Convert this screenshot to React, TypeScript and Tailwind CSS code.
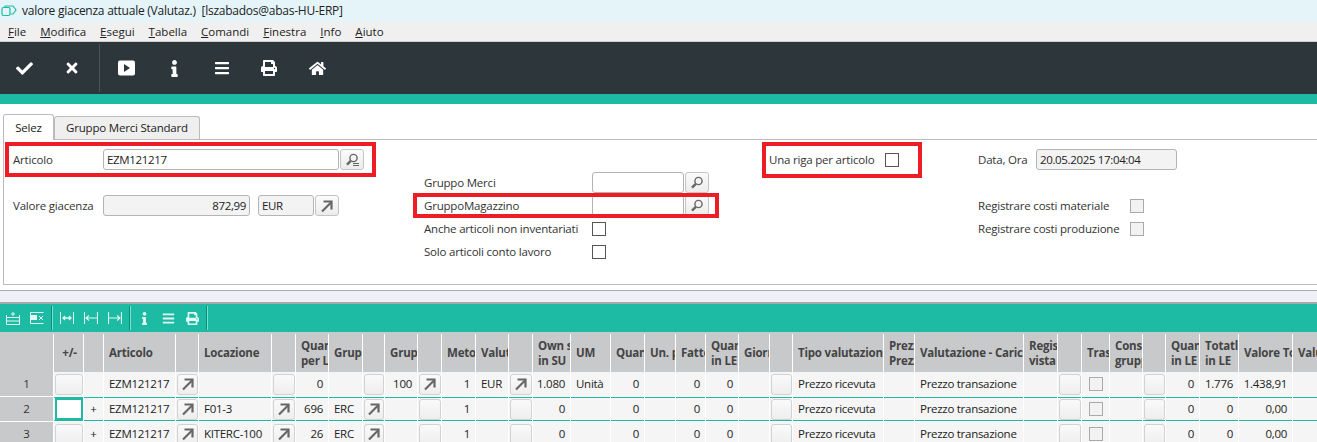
import React from 'react'
import { FaBars, FaCheck, FaHome, FaInfo, FaPrint, FaTimes } from 'react-icons/fa'

const menus = [
  ['F', 'ile'],
  ['M', 'odifica'],
  ['E', 'segui'],
  ['T', 'abella'],
  ['C', 'omandi'],
  ['F', 'inestra'],
  ['I', 'nfo'],
  ['A', 'iuto'],
]

const ArrowIcon = () => (
  <svg width="14" height="14" viewBox="0 0 14 14" fill="none" stroke="#666" strokeWidth="2.2">
    <path d="M2 12.5 L11 3.5" />
    <path d="M3.5 2.5 H11.5 V10.5" />
  </svg>
)

const SearchIcon = ({ list }: { list?: boolean }) => (
  <svg width="16" height="16" viewBox="0 0 16 16" fill="none" stroke="#666">
    <circle cx="9.5" cy="6" r="3.6" strokeWidth="1.4" fill="#f4f4f4" />
    <path d="M6.8 8.8 L3 12.6" strokeWidth="2.4" />
    {list && <path d="M9 11.5 H15 M9 13.5 H15" strokeWidth="1" />}
  </svg>
)

const LightSep = () => (
  <div className="mx-[7px] h-[24px] w-[2px] border-l border-r border-l-[#0b8d7a] border-r-[#6fe6d0]" />
)

const StripIcon = ({ children }: { children: React.ReactNode }) => (
  <svg width="14" height="14" viewBox="0 0 14 14" fill="none" stroke="#e2f8f3" strokeWidth="1">
    {children}
  </svg>
)

function Field({ value, width, readOnly, right }: { value?: string; width: string; readOnly?: boolean; right?: boolean }) {
  return (
    <div
      className={`${width} flex h-[21px] items-center rounded-[3px] border border-[#b4b4b4] px-[3px] tracking-[-0.35px] text-[#222] ${
        readOnly ? 'bg-[#f3f3f3]' : 'bg-white'
      } ${right ? 'justify-end' : ''}`}
    >
      {value}
    </div>
  )
}

function FieldButton({ children }: { children: React.ReactNode }) {
  return (
    <div className="ml-px flex h-[21px] w-[24px] items-center justify-center rounded-[3px] border border-[#c4c4c4] bg-linear-to-b from-[#fbfbfb] to-[#ececec]">
      {children}
    </div>
  )
}

const CheckBox = ({ disabled }: { disabled?: boolean }) => (
  <div className={`size-[14px] border ${disabled ? 'border-[#aaa] bg-[#f2f2f2]' : 'border-[#555] bg-white'}`} />
)

const headers: React.ReactNode[] = [
  '', '+/-', '', 'Articolo', '', 'Locazione', '',
  ['Quantità', 'per LE'], 'Gruppo', '', 'Gruppo', '', 'Metodo', 'Valuta', '',
  ['Own stock', 'in SU'], 'UM', 'Quantità', 'Un. prezzo', 'Fattore', ['Quantità', 'in LE'], 'Giorni', '',
  'Tipo valutazione', ['Prezzo', 'Prezzo'], 'Valutazione - Carico', ['Registro', 'vista'], '', 'Trasf',
  ['Consumo', 'gruppo'], '', ['Quantità', 'in LE'], ['Totatlo', 'in LE'], 'Valore Totale', 'Valuta',
].map((h) =>
  Array.isArray(h) ? (
    <span className="leading-[15px]">
      {h[0]}
      <br />
      {h[1]}
    </span>
  ) : (
    h
  ),
)

const rightCols = [7, 10, 12, 15, 17, 19, 20, 31, 32, 33]

// '#B' empty button, '#A' arrow button, '#C' disabled checkbox, '#F' focused cell
const rows = [
  ['1', '#B', '', 'EZM121217', '#A', '', '#B', '0', '', '#B', '100', '#A', '1', 'EUR', '#A', '1.080', 'Unità', '0', '', '0', '0', '', '#B', 'Prezzo ricevuta', '', 'Prezzo transazione', '', '#B', '#C', '', '#B', '0', '1.776', '1.438,91', ''],
  ['2', '#F', '+', 'EZM121217', '#A', 'F01-3', '#A', '696', 'ERC', '#A', '', '#B', '1', '', '#B', '0', '', '0', '', '0', '0', '', '#B', 'Prezzo ricevuta', '', 'Prezzo transazione', '', '#B', '#C', '', '#B', '0', '0', '0,00', ''],
  ['3', '#B', '+', 'EZM121217', '#A', 'KITERC-100', '#A', '26', 'ERC', '#A', '', '#B', '1', '', '#B', '0', '', '0', '', '0', '0', '', '#B', 'Prezzo ricevuta', '', 'Prezzo transazione', '', '#B', '#C', '', '#B', '0', '0', '0,00', ''],
]

function CellContent({ value }: { value: string }) {
  if (value === '#F') {
    return <div className="ml-px h-[22px] w-[28px] border-2 border-[#1dbba4] bg-white" />
  }
  if (value === '#C') return <div className="flex w-full justify-center"><CheckBox disabled /></div>
  if (value === '#A' || value === '#B') {
    return (
      <div className="ml-px flex h-[21px] w-full items-center justify-center rounded-[3px] border border-[#d2d2d2] bg-linear-to-b from-[#fafafa] to-[#eeeeee]">
        {value === '#A' && <ArrowIcon />}
      </div>
    )
  }
  return <>{value}</>
}

export default function App() {
  return (
    <div className="relative h-[442px] w-[1317px] overflow-hidden bg-white font-['Open_Sans','Liberation_Sans',sans-serif] text-[11.5px] tracking-[-0.2px] text-[#333]">
      {/* title bar */}
      <div className="flex h-[22px] items-center bg-[#e4f4f9] pl-px text-[12px] tracking-[-0.25px] text-[#222]">
        <svg width="16" height="14" viewBox="0 0 16 14" fill="none" stroke="#1dbba4" strokeWidth="1.2">
          <rect x="1" y="3.5" width="8" height="8" rx="1.5" />
          <path d="M4 3 V2 H12 L15 6 L12 10 H9.5" />
        </svg>
        <span className="ml-[5px] whitespace-pre">valore giacenza attuale (Valutaz.)  [lszabados@abas-HU-ERP]</span>
      </div>

      {/* menu */}
      <div className="flex h-[20px] items-center gap-[14px] border-b border-[#d0d0d0] bg-[#f0f0f0] pl-2 tracking-normal text-[#222]">
        {menus.map(([key, rest], i) => (
          <span key={i}>
            <u>{key}</u>
            {rest}
          </span>
        ))}
      </div>

      {/* main toolbar */}
      <div className="flex h-[52px] items-center bg-[#2d363b] text-white">
        <div className="flex w-[99px] items-center justify-around pr-[4px]">
          <FaCheck size={17} />
          <FaTimes size={16} />
        </div>
        <div className="h-[48px] w-px bg-[#48525a]" />
        <div className="ml-[18px] flex items-center gap-[31px]">
          <svg width="17" height="16" viewBox="0 0 17 16">
            <rect width="17" height="15" y="0.5" rx="2" fill="#fff" />
            <path d="M6 4 L12 8 L6 12 Z" fill="#2d363b" />
          </svg>
          <FaInfo size={17} />
          <FaBars size={16} />
          <FaPrint size={16} />
          <div className="ml-[1px]">
            <FaHome size={17} />
          </div>
        </div>
      </div>
      <div className="h-[10px] bg-[#1dbba4]" />

      {/* tabs */}
      <div className="flex h-[35px] items-end bg-white pl-[3px] text-[#222]">
        <div className="relative top-px flex h-[26px] w-[51px] items-center justify-center rounded-t-[3px] border border-b-0 border-[#bbb] bg-white">
          Selez
        </div>
        <div className="flex h-[23px] w-[146px] items-center justify-center rounded-t-[3px] border border-b-0 border-[#bbb] bg-[#efefef]">
          Gruppo Merci Standard
        </div>
      </div>

      {/* selection panel */}
      <div className="ml-[3px] grid h-[146px] grid-cols-[411px_345px_209px_1fr] grid-rows-[repeat(5,23px)] border-t border-b border-l border-[#bbb] pt-[8px] pl-[9px]">
        <div className="flex items-center">
          <span className="w-[90px]">Articolo</span>
          <Field value="EZM121217" width="w-[236px]" />
          <FieldButton>
            <SearchIcon list />
          </FieldButton>
        </div>
        <div />
        <div className="flex items-center">
          <span className="w-[116px]">Una riga per articolo</span>
          <CheckBox />
        </div>
        <div className="flex items-center">
          <span className="w-[58px]">Data, Ora</span>
          <Field value="20.05.2025 17:04:04" width="w-[141px]" readOnly />
        </div>

        <div />
        <div className="flex items-center">
          <span className="w-[168px]">Gruppo Merci</span>
          <Field width="w-[92px]" />
          <FieldButton>
            <SearchIcon />
          </FieldButton>
        </div>
        <div />
        <div />

        <div className="flex items-center">
          <span className="w-[90px]">Valore giacenza</span>
          <Field value="872,99" width="w-[147px]" readOnly right />
          <div className="ml-2">
            <Field value="EUR" width="w-[56px]" readOnly />
          </div>
          <FieldButton>
            <ArrowIcon />
          </FieldButton>
        </div>
        <div className="flex items-center">
          <span className="w-[168px]">GruppoMagazzino</span>
          <Field width="w-[92px]" />
          <FieldButton>
            <SearchIcon />
          </FieldButton>
        </div>
        <div />
        <div className="flex items-center">
          <span className="w-[152px]">Registrare costi materiale</span>
          <CheckBox disabled />
        </div>

        <div />
        <div className="flex items-center">
          <span className="w-[168px]">Anche articoli non inventariati</span>
          <CheckBox />
        </div>
        <div />
        <div className="flex items-center">
          <span className="w-[152px]">Registrare costi produzione</span>
          <CheckBox disabled />
        </div>

        <div />
        <div className="flex items-center">
          <span className="w-[168px]">Solo articoli conto lavoro</span>
          <CheckBox />
        </div>
      </div>

      {/* splitter */}
      <div className="mt-[5px] h-[14px] border-t border-b-2 border-t-[#aaa] border-b-[#a8a8a8] bg-[#f0f0f8]" />

      {/* table toolbar */}
      <div className="flex h-[28px] items-center bg-[#1dbba4] pl-[6px] text-[#e2f8f3]">
        <div className="flex items-center gap-[10px]">
          <StripIcon>
            <path d="M0.5 6.5 H13.5 V13.5 H0.5 Z M0.5 10 H13.5 M0.5 6.5 V4 M13.5 6.5 V4 M7 1 V5 M5 3 H9" />
          </StripIcon>
          <StripIcon>
            <path d="M0.5 1.5 H13.5 M0.5 12.5 H13.5 M0.5 1.5 V12.5" />
            <rect x="1" y="4" width="6" height="5" fill="#e2f8f3" stroke="none" />
            <path d="M9 5 L13 9 M13 5 L9 9" />
          </StripIcon>
        </div>
        <LightSep />
        <div className="flex items-center gap-[10px]">
          <StripIcon>
            <path d="M0.5 1 V13 M13.5 1 V13" />
            <path d="M3 7 H11 M5 5 L3 7 L5 9 M9 5 L11 7 L9 9" strokeWidth="1.3" />
          </StripIcon>
          <StripIcon>
            <path d="M0.5 1 V13 M13.5 1 V13 M2 7 H13 M5 4.5 L2 7 L5 9.5" strokeWidth="1.1" />
          </StripIcon>
          <StripIcon>
            <path d="M0.5 1 V13 M13.5 1 V13 M1 7 H12 M9 4.5 L12 7 L9 9.5" strokeWidth="1.1" />
          </StripIcon>
        </div>
        <LightSep />
        <div className="flex items-center gap-[11px]">
          <FaInfo size={13} />
          <FaBars size={13} />
          <FaPrint size={13} />
        </div>
        <LightSep />
      </div>

      {/* table */}
      <div className="grid w-[1340px] grid-cols-[54px_30px_20px_72px_23px_73px_24px_33px_34px_22px_33px_24px_34px_33px_24px_38px_40px_34px_31px_30px_33px_31px_23px_91px_31px_109px_34px_24px_28px_33px_23px_34px_39px_54px_48px]">
        {headers.map((header, i) => (
          <div key={i} className="h-[40px] bg-[#c8c9cb] pt-[2px]">
            <div
              className={`flex h-full items-center overflow-hidden border-r border-white pr-[3px] pl-[5px] font-bold whitespace-nowrap text-[#444] ${
                i === 1 ? 'justify-center' : ''
              }`}
            >
              {header}
            </div>
          </div>
        ))}
        {rows.map((row, r) =>
          row.map((value, c) => (
            <div
              key={`${r}-${c}`}
              className={`flex h-[25px] items-center overflow-hidden border-r border-b border-white tracking-[-0.28px] whitespace-nowrap text-[#222] ${
                c === 0 ? 'justify-center bg-[#c8c9cb] text-[#333]' : 'bg-[#f5f5f5]'
              } ${r === 1 && c > 0 ? 'shadow-[inset_0_1px_0_#1dbba4,inset_0_-1px_0_#1dbba4]' : ''} ${
                value.startsWith('#') ? '' : 'px-[5px]'
              } ${rightCols.includes(c) ? 'justify-end' : ''} ${c === 2 ? 'justify-center' : ''}`}
            >
              <CellContent value={value} />
            </div>
          )),
        )}
      </div>

      {/* red annotation frames */}
      <div className="absolute top-[142px] left-[5px] h-[35px] w-[371px] border-[4px] border-[#ee1c25]" />
      <div className="absolute top-[142px] left-[762px] h-[36px] w-[160px] border-[4px] border-[#ee1c25]" />
      <div className="absolute top-[193px] left-[413px] h-[25px] w-[306px] border-[4px] border-[#ee1c25]" />
    </div>
  )
}
